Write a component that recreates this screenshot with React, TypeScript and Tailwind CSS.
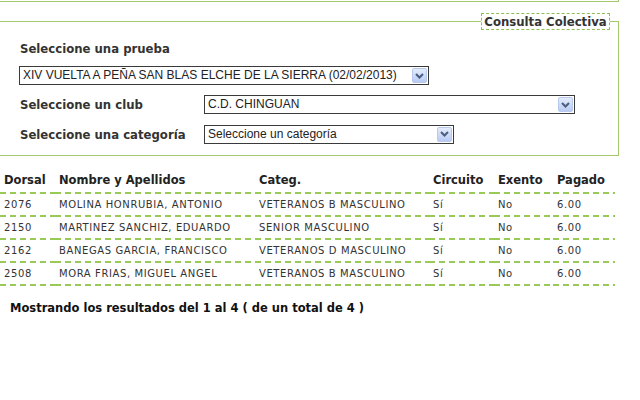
import React from 'react';

const verdana = "font-['DejaVu_Sans',Verdana,sans-serif]";
const tahoma = "font-['DejaVu_Sans_Condensed','DejaVu_Sans',Tahoma,sans-serif]";
const arial = "font-['Liberation_Sans',Arial,sans-serif]";

const rows = [
  { dorsal: '2076', nombre: 'MOLINA HONRUBIA, ANTONIO', categ: 'VETERANOS B MASCULINO' },
  { dorsal: '2150', nombre: 'MARTINEZ SANCHIZ, EDUARDO', categ: 'SENIOR MASCULINO' },
  { dorsal: '2162', nombre: 'BANEGAS GARCIA, FRANCISCO', categ: 'VETERANOS D MASCULINO' },
  { dorsal: '2508', nombre: 'MORA FRIAS, MIGUEL ANGEL', categ: 'VETERANOS B MASCULINO' },
];

const cols = 'grid grid-cols-[55px_200px_174px_65px_59px_62px]';
const dashed =
  'bg-[repeating-linear-gradient(90deg,#99c957_0_6px,transparent_6px_10px)] bg-no-repeat bg-bottom bg-[length:100%_2px]';

const SelectBox: React.FC<{ value: string; className: string }> = ({ value, className }) => (
  <div className={`flex items-center h-[19px] border border-[#3a3a3a] bg-white pl-[3px] pr-[1px] ${className}`}>
    <span className={`flex-1 text-[12px] text-[#222] leading-[15px] whitespace-nowrap overflow-hidden ${arial}`}>{value}</span>
    <span className="flex items-center justify-center w-[15px] h-[15px] rounded-[2px] border border-[#b9c9ee] bg-[linear-gradient(#e4ecfc,#b9cbf4)]">
      <svg width="9" height="6" viewBox="0 0 9 6">
        <path d="M1 1 L4.5 4.5 L8 1" stroke="#4a5c80" strokeWidth="2" fill="none" />
      </svg>
    </span>
  </div>
);

const Label: React.FC<{ text: string; className?: string }> = ({ text, className }) => (
  <span className={`text-[13px] font-bold text-[#333] whitespace-nowrap ${tahoma} ${className || ''}`}>{text}</span>
);

const App: React.FC = () => {
  return (
    <div className="w-[640px] h-[400px] bg-white overflow-hidden">
      <div className="w-[619px] h-[2px] border-b border-r border-[#a4c86e]" />

      <div className="relative mt-[19px] w-[619px] h-[135px] border-t border-r border-b border-[#a4c86e]">
        <span className={`absolute -top-[9px] left-[481px] w-[129px] h-[17px] flex items-center justify-center whitespace-nowrap bg-white border border-dashed border-[#8fc04c] text-[13px] font-bold text-[#333] ${tahoma}`}>
          Consulta Colectiva
        </span>

        <div className="pt-[18px] pl-[19px] flex flex-col">
          <Label text="Seleccione una prueba" className="pl-[1px] leading-[17px]" />
          <SelectBox
            className="mt-[9px] w-[410px]"
            value="XIV VUELTA A PEÑA SAN BLAS ELCHE DE LA SIERRA (02/02/2013)"
          />
          <div className="mt-[10px] flex items-center">
            <Label text="Seleccione un club" className="w-[185px] pl-[1px]" />
            <SelectBox className="w-[371px]" value="C.D. CHINGUAN" />
          </div>
          <div className="mt-[10px] flex items-center">
            <Label text="Seleccione una categoría" className="w-[185px] pl-[1px]" />
            <SelectBox className="w-[250px]" value="Seleccione un categoría" />
          </div>
        </div>
      </div>

      <div className="mt-[16px] w-[615px]">
        <div className={`${cols} h-[22px] text-[11.5px] font-bold text-[#222] ${verdana}`}>
          {['Dorsal', 'Nombre y Apellidos', 'Categ.', 'Circuito', 'Exento', 'Pagado'].map((h) => (
            <div key={h} className={`pl-[4px] pb-[4px] flex items-center whitespace-nowrap ${dashed}`}>
              {h}
            </div>
          ))}
        </div>
        {rows.map((r) => (
          <div key={r.dorsal} className={`${cols} h-[23px] text-[10px] text-[#333] tracking-[0.6px] ${verdana}`}>
            {[r.dorsal, r.nombre, r.categ, 'Sí', 'No', '6.00'].map((c, i) => (
              <div key={i} className={`pl-[4px] pb-[2px] flex items-center ${dashed}`}>
                {c}
              </div>
            ))}
          </div>
        ))}
      </div>

      <div className={`mt-[14px] pl-[10px] text-[11.5px] font-bold text-[#111] ${verdana}`}>
        Mostrando los resultados del 1 al 4 ( de un total de 4 )
      </div>
    </div>
  );
};

export default App;
